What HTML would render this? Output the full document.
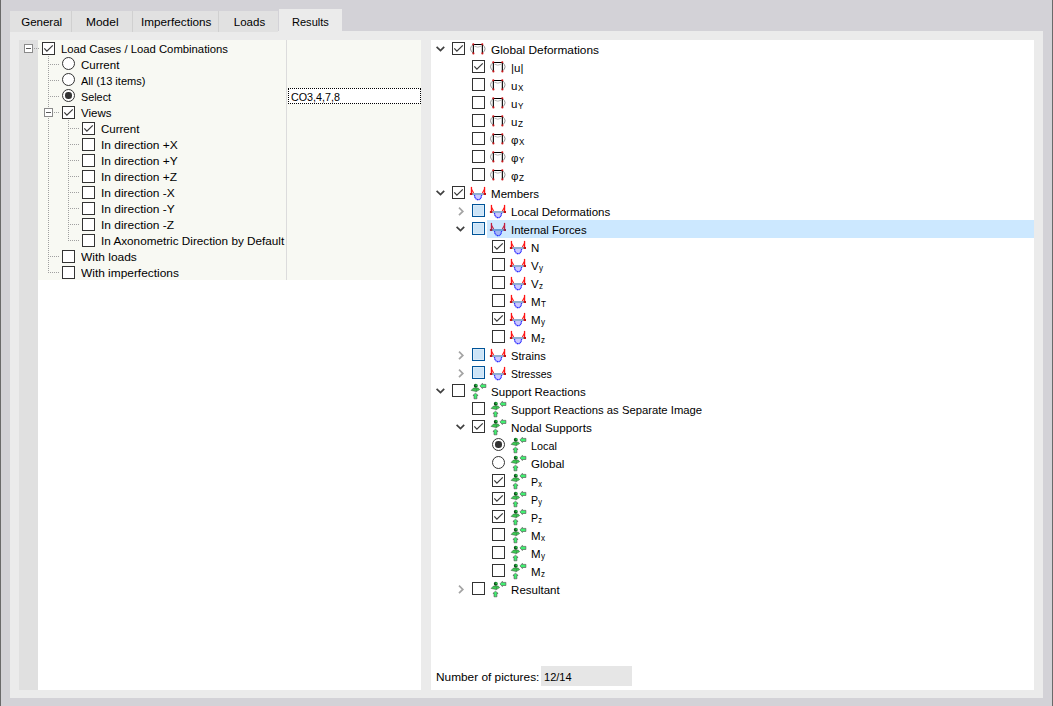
<!DOCTYPE html><html><head><meta charset="utf-8"><style>
html,body{margin:0;padding:0;}
body{width:1053px;height:706px;position:relative;overflow:hidden;background:#d3d2d7;font-family:"Liberation Sans",sans-serif;font-size:11.5px;color:#000;}
.r{position:absolute;}
.t{position:absolute;white-space:nowrap;line-height:normal;transform-origin:0 0;}
.cb{position:absolute;width:11px;height:11px;border:1px solid #333;background:#fff;}
.cb.ind{border-color:#005499;background:#cce4f7;box-shadow:inset 0 0 0 1px #dcecf9;}
.ra{position:absolute;width:11px;height:11px;border:1px solid #333;border-radius:50%;background:#fff;}
.rd{position:absolute;left:2.25px;top:2.25px;width:6.5px;height:6.5px;border-radius:50%;background:#333;}
.eb{position:absolute;width:7px;height:7px;border:1px solid #8a8a8a;background:#fff;}
.ebm{position:absolute;left:1px;top:3px;width:5px;height:1px;background:#5a5a5a;}
.vd{position:absolute;width:1px;background:repeating-linear-gradient(to bottom,#a0a0a0 0,#a0a0a0 1px,transparent 1px,transparent 2px);}
.hd{position:absolute;height:1px;background:repeating-linear-gradient(to right,#a0a0a0 0,#a0a0a0 1px,transparent 1px,transparent 2px);}
.ic{position:absolute;}
sub{font-size:9px;vertical-align:baseline;position:relative;top:1px;display:inline-block;transform:scaleX(0.9);transform-origin:0 0;}
</style></head><body>
<svg width="0" height="0" style="position:absolute"><defs><radialGradient id="sg" cx="0.65" cy="0.35" r="0.7"><stop offset="0" stop-color="#34d456"/><stop offset="0.5" stop-color="#0a6a1c"/><stop offset="1" stop-color="#002a08"/></radialGradient></defs></svg>

<div class="r" style="left:0px;top:0px;width:1px;height:706px;background:#6a6a6a;"></div>
<div class="r" style="left:1052px;top:0px;width:1px;height:706px;background:#6a6a6a;"></div>
<div class="r" style="left:10px;top:31px;width:1033px;height:667px;background:#ebebeb;"></div>
<div class="r" style="left:10px;top:11px;width:61px;height:21px;background:#e1e1e1;"></div>
<div class="r" style="left:72px;top:11px;width:60px;height:21px;background:#e1e1e1;"></div>
<div class="r" style="left:133px;top:11px;width:85px;height:21px;background:#e1e1e1;"></div>
<div class="r" style="left:219px;top:11px;width:59px;height:21px;background:#e1e1e1;"></div>
<div class="r" style="left:71px;top:11px;width:1px;height:21px;background:#d0d0d0;"></div>
<div class="r" style="left:132px;top:11px;width:1px;height:21px;background:#d0d0d0;"></div>
<div class="r" style="left:218px;top:11px;width:1px;height:21px;background:#d0d0d0;"></div>
<div class="r" style="left:279px;top:9px;width:63px;height:23px;background:#ebebeb;"></div>
<div class="t" style="left:21.20px;top:15.59px;">General</div>
<div class="t" style="left:85.70px;top:15.59px;transform:scaleX(1.04);">Model</div>
<div class="t" style="left:140.90px;top:15.59px;transform:scaleX(1.02);">Imperfections</div>
<div class="t" style="left:233.80px;top:15.59px;">Loads</div>
<div class="t" style="left:291.90px;top:15.59px;transform:scaleX(0.96);">Results</div>
<div class="r" style="left:19px;top:40px;width:402px;height:650px;background:#ffffff;"></div>
<div class="r" style="left:19px;top:40px;width:19px;height:650px;background:#e0e0e0;"></div>
<div class="r" style="left:38px;top:40px;width:383px;height:240px;background:#f8f9f3;"></div>
<div class="r" style="left:286px;top:40px;width:1px;height:240px;background:#dcdcdc;"></div>
<div class="r" style="left:288px;top:88px;width:131px;height:14px;background:#fff;border:1px dotted #000;"></div>
<div class="t" style="left:291.30px;top:90.59px;transform:scaleX(0.934);">CO3,4,7,8</div>
<div class="eb" style="left:24px;top:44px"><div class="ebm"></div></div>
<div class="hd" style="left:34px;top:48px;width:6px"></div>
<div class="cb" style="left:42px;top:42px"><svg width="13" height="13" style="position:absolute;left:-1px;top:-1px"><path d="M2.3 6.4 L4.9 9.2 L10.8 3.3" fill="none" stroke="#3a3a3a" stroke-width="1.2"/></svg></div>
<div class="t" style="left:61.00px;top:42.59px;transform:scaleX(0.982);">Load Cases / Load Combinations</div>
<div class="vd" style="left:48px;top:56px;height:217px"></div>
<div class="hd" style="left:50px;top:64px;width:10px"></div>
<div class="ra" style="left:62px;top:57px"></div>
<div class="t" style="left:81.00px;top:58.59px;">Current</div>
<div class="hd" style="left:50px;top:80px;width:10px"></div>
<div class="ra" style="left:62px;top:73px"></div>
<div class="t" style="left:81.00px;top:74.59px;transform:scaleX(0.96);">All (13 items)</div>
<div class="hd" style="left:50px;top:96px;width:10px"></div>
<div class="ra" style="left:62px;top:89px"><div class="rd"></div></div>
<div class="t" style="left:81.00px;top:90.59px;transform:scaleX(0.94);">Select</div>
<div class="eb" style="left:44px;top:108px"><div class="ebm"></div></div>
<div class="hd" style="left:54px;top:112px;width:6px"></div>
<div class="cb" style="left:62px;top:106px"><svg width="13" height="13" style="position:absolute;left:-1px;top:-1px"><path d="M2.3 6.4 L4.9 9.2 L10.8 3.3" fill="none" stroke="#3a3a3a" stroke-width="1.2"/></svg></div>
<div class="t" style="left:81.00px;top:106.59px;">Views</div>
<div class="vd" style="left:68px;top:120px;height:121px"></div>
<div class="hd" style="left:70px;top:128px;width:10px"></div>
<div class="cb" style="left:82px;top:122px"><svg width="13" height="13" style="position:absolute;left:-1px;top:-1px"><path d="M2.3 6.4 L4.9 9.2 L10.8 3.3" fill="none" stroke="#3a3a3a" stroke-width="1.2"/></svg></div>
<div class="t" style="left:101.00px;top:122.59px;">Current</div>
<div class="hd" style="left:70px;top:144px;width:10px"></div>
<div class="cb" style="left:82px;top:138px"></div>
<div class="t" style="left:101.00px;top:138.59px;transform:scaleX(1.04);">In direction +X</div>
<div class="hd" style="left:70px;top:160px;width:10px"></div>
<div class="cb" style="left:82px;top:154px"></div>
<div class="t" style="left:101.00px;top:154.59px;transform:scaleX(1.04);">In direction +Y</div>
<div class="hd" style="left:70px;top:176px;width:10px"></div>
<div class="cb" style="left:82px;top:170px"></div>
<div class="t" style="left:101.00px;top:170.59px;transform:scaleX(1.04);">In direction +Z</div>
<div class="hd" style="left:70px;top:192px;width:10px"></div>
<div class="cb" style="left:82px;top:186px"></div>
<div class="t" style="left:101.00px;top:186.59px;transform:scaleX(1.04);">In direction -X</div>
<div class="hd" style="left:70px;top:208px;width:10px"></div>
<div class="cb" style="left:82px;top:202px"></div>
<div class="t" style="left:101.00px;top:202.59px;transform:scaleX(1.04);">In direction -Y</div>
<div class="hd" style="left:70px;top:224px;width:10px"></div>
<div class="cb" style="left:82px;top:218px"></div>
<div class="t" style="left:101.00px;top:218.59px;transform:scaleX(1.04);">In direction -Z</div>
<div class="hd" style="left:70px;top:240px;width:10px"></div>
<div class="cb" style="left:82px;top:234px"></div>
<div class="t" style="left:101.00px;top:234.59px;transform:scaleX(1.02);">In Axonometric Direction by Default</div>
<div class="hd" style="left:50px;top:256px;width:10px"></div>
<div class="cb" style="left:62px;top:250px"></div>
<div class="t" style="left:81.00px;top:250.59px;transform:scaleX(1.04);">With loads</div>
<div class="hd" style="left:50px;top:272px;width:10px"></div>
<div class="cb" style="left:62px;top:266px"></div>
<div class="t" style="left:81.00px;top:266.59px;transform:scaleX(1.035);">With imperfections</div>
<div class="r" style="left:431px;top:40px;width:603px;height:650px;background:#ffffff;"></div>
<div class="r" style="left:487px;top:220px;width:547px;height:18px;background:#cce8ff;"></div>
<svg class="ic" style="left:432px;top:40px" width="16" height="18"><path d="M4.6 6.8 L8.5 10.6 L12.2 6.8" fill="none" stroke="#404040" stroke-width="1.7"/></svg>
<div class="cb" style="left:452px;top:42px"><svg width="13" height="13" style="position:absolute;left:-1px;top:-1px"><path d="M2.3 6.4 L4.9 9.2 L10.8 3.3" fill="none" stroke="#3a3a3a" stroke-width="1.2"/></svg></div>
<svg class="ic" style="left:468px;top:40px" width="20" height="18" viewBox="0 0 20 18">
<path d="M5.3 4.4 Q-0.3 8.8 5.3 13.2" fill="none" stroke="#989898" stroke-width="1"/>
<path d="M14.3 4.4 Q19.9 8.8 14.3 13.2" fill="none" stroke="#989898" stroke-width="1"/>
<path d="M6.5 6.2 Q9.8 8.2 13.2 6.2" fill="none" stroke="#b0b0b0" stroke-width="0.9"/>
<path d="M5.35 13.4 L5.35 4.45 L14.35 4.45 L14.35 13.4" fill="none" stroke="#000" stroke-width="1.1"/>
<circle cx="5.3" cy="4.3" r="1.05" fill="#cc1418"/><circle cx="14.3" cy="4.3" r="1.05" fill="#cc1418"/>
<circle cx="5.4" cy="13.4" r="1.05" fill="#cc1418"/><circle cx="14.4" cy="13.4" r="1.05" fill="#cc1418"/>
</svg>
<div class="t" style="left:491.10px;top:43.59px;transform:scaleX(1.03);">Global Deformations</div>
<div class="cb" style="left:472px;top:60px"><svg width="13" height="13" style="position:absolute;left:-1px;top:-1px"><path d="M2.3 6.4 L4.9 9.2 L10.8 3.3" fill="none" stroke="#3a3a3a" stroke-width="1.2"/></svg></div>
<svg class="ic" style="left:488px;top:58px" width="20" height="18" viewBox="0 0 20 18">
<path d="M5.3 4.4 Q-0.3 8.8 5.3 13.2" fill="none" stroke="#989898" stroke-width="1"/>
<path d="M14.3 4.4 Q19.9 8.8 14.3 13.2" fill="none" stroke="#989898" stroke-width="1"/>
<path d="M6.5 6.2 Q9.8 8.2 13.2 6.2" fill="none" stroke="#b0b0b0" stroke-width="0.9"/>
<path d="M5.35 13.4 L5.35 4.45 L14.35 4.45 L14.35 13.4" fill="none" stroke="#000" stroke-width="1.1"/>
<circle cx="5.3" cy="4.3" r="1.05" fill="#cc1418"/><circle cx="14.3" cy="4.3" r="1.05" fill="#cc1418"/>
<circle cx="5.4" cy="13.4" r="1.05" fill="#cc1418"/><circle cx="14.4" cy="13.4" r="1.05" fill="#cc1418"/>
</svg>
<div class="t" style="left:511.10px;top:61.59px;">|u|</div>
<div class="cb" style="left:472px;top:78px"></div>
<svg class="ic" style="left:488px;top:76px" width="20" height="18" viewBox="0 0 20 18">
<path d="M5.3 4.4 Q-0.3 8.8 5.3 13.2" fill="none" stroke="#989898" stroke-width="1"/>
<path d="M14.3 4.4 Q19.9 8.8 14.3 13.2" fill="none" stroke="#989898" stroke-width="1"/>
<path d="M6.5 6.2 Q9.8 8.2 13.2 6.2" fill="none" stroke="#b0b0b0" stroke-width="0.9"/>
<path d="M5.35 13.4 L5.35 4.45 L14.35 4.45 L14.35 13.4" fill="none" stroke="#000" stroke-width="1.1"/>
<circle cx="5.3" cy="4.3" r="1.05" fill="#cc1418"/><circle cx="14.3" cy="4.3" r="1.05" fill="#cc1418"/>
<circle cx="5.4" cy="13.4" r="1.05" fill="#cc1418"/><circle cx="14.4" cy="13.4" r="1.05" fill="#cc1418"/>
</svg>
<div class="t" style="left:511.10px;top:79.59px;">u<sub>X</sub></div>
<div class="cb" style="left:472px;top:96px"></div>
<svg class="ic" style="left:488px;top:94px" width="20" height="18" viewBox="0 0 20 18">
<path d="M5.3 4.4 Q-0.3 8.8 5.3 13.2" fill="none" stroke="#989898" stroke-width="1"/>
<path d="M14.3 4.4 Q19.9 8.8 14.3 13.2" fill="none" stroke="#989898" stroke-width="1"/>
<path d="M6.5 6.2 Q9.8 8.2 13.2 6.2" fill="none" stroke="#b0b0b0" stroke-width="0.9"/>
<path d="M5.35 13.4 L5.35 4.45 L14.35 4.45 L14.35 13.4" fill="none" stroke="#000" stroke-width="1.1"/>
<circle cx="5.3" cy="4.3" r="1.05" fill="#cc1418"/><circle cx="14.3" cy="4.3" r="1.05" fill="#cc1418"/>
<circle cx="5.4" cy="13.4" r="1.05" fill="#cc1418"/><circle cx="14.4" cy="13.4" r="1.05" fill="#cc1418"/>
</svg>
<div class="t" style="left:511.10px;top:97.59px;">u<sub>Y</sub></div>
<div class="cb" style="left:472px;top:114px"></div>
<svg class="ic" style="left:488px;top:112px" width="20" height="18" viewBox="0 0 20 18">
<path d="M5.3 4.4 Q-0.3 8.8 5.3 13.2" fill="none" stroke="#989898" stroke-width="1"/>
<path d="M14.3 4.4 Q19.9 8.8 14.3 13.2" fill="none" stroke="#989898" stroke-width="1"/>
<path d="M6.5 6.2 Q9.8 8.2 13.2 6.2" fill="none" stroke="#b0b0b0" stroke-width="0.9"/>
<path d="M5.35 13.4 L5.35 4.45 L14.35 4.45 L14.35 13.4" fill="none" stroke="#000" stroke-width="1.1"/>
<circle cx="5.3" cy="4.3" r="1.05" fill="#cc1418"/><circle cx="14.3" cy="4.3" r="1.05" fill="#cc1418"/>
<circle cx="5.4" cy="13.4" r="1.05" fill="#cc1418"/><circle cx="14.4" cy="13.4" r="1.05" fill="#cc1418"/>
</svg>
<div class="t" style="left:511.10px;top:115.59px;">u<sub>Z</sub></div>
<div class="cb" style="left:472px;top:132px"></div>
<svg class="ic" style="left:488px;top:130px" width="20" height="18" viewBox="0 0 20 18">
<path d="M5.3 4.4 Q-0.3 8.8 5.3 13.2" fill="none" stroke="#989898" stroke-width="1"/>
<path d="M14.3 4.4 Q19.9 8.8 14.3 13.2" fill="none" stroke="#989898" stroke-width="1"/>
<path d="M6.5 6.2 Q9.8 8.2 13.2 6.2" fill="none" stroke="#b0b0b0" stroke-width="0.9"/>
<path d="M5.35 13.4 L5.35 4.45 L14.35 4.45 L14.35 13.4" fill="none" stroke="#000" stroke-width="1.1"/>
<circle cx="5.3" cy="4.3" r="1.05" fill="#cc1418"/><circle cx="14.3" cy="4.3" r="1.05" fill="#cc1418"/>
<circle cx="5.4" cy="13.4" r="1.05" fill="#cc1418"/><circle cx="14.4" cy="13.4" r="1.05" fill="#cc1418"/>
</svg>
<div class="t" style="left:511.10px;top:133.59px;">φ<sub>X</sub></div>
<div class="cb" style="left:472px;top:150px"></div>
<svg class="ic" style="left:488px;top:148px" width="20" height="18" viewBox="0 0 20 18">
<path d="M5.3 4.4 Q-0.3 8.8 5.3 13.2" fill="none" stroke="#989898" stroke-width="1"/>
<path d="M14.3 4.4 Q19.9 8.8 14.3 13.2" fill="none" stroke="#989898" stroke-width="1"/>
<path d="M6.5 6.2 Q9.8 8.2 13.2 6.2" fill="none" stroke="#b0b0b0" stroke-width="0.9"/>
<path d="M5.35 13.4 L5.35 4.45 L14.35 4.45 L14.35 13.4" fill="none" stroke="#000" stroke-width="1.1"/>
<circle cx="5.3" cy="4.3" r="1.05" fill="#cc1418"/><circle cx="14.3" cy="4.3" r="1.05" fill="#cc1418"/>
<circle cx="5.4" cy="13.4" r="1.05" fill="#cc1418"/><circle cx="14.4" cy="13.4" r="1.05" fill="#cc1418"/>
</svg>
<div class="t" style="left:511.10px;top:151.59px;">φ<sub>Y</sub></div>
<div class="cb" style="left:472px;top:168px"></div>
<svg class="ic" style="left:488px;top:166px" width="20" height="18" viewBox="0 0 20 18">
<path d="M5.3 4.4 Q-0.3 8.8 5.3 13.2" fill="none" stroke="#989898" stroke-width="1"/>
<path d="M14.3 4.4 Q19.9 8.8 14.3 13.2" fill="none" stroke="#989898" stroke-width="1"/>
<path d="M6.5 6.2 Q9.8 8.2 13.2 6.2" fill="none" stroke="#b0b0b0" stroke-width="0.9"/>
<path d="M5.35 13.4 L5.35 4.45 L14.35 4.45 L14.35 13.4" fill="none" stroke="#000" stroke-width="1.1"/>
<circle cx="5.3" cy="4.3" r="1.05" fill="#cc1418"/><circle cx="14.3" cy="4.3" r="1.05" fill="#cc1418"/>
<circle cx="5.4" cy="13.4" r="1.05" fill="#cc1418"/><circle cx="14.4" cy="13.4" r="1.05" fill="#cc1418"/>
</svg>
<div class="t" style="left:511.10px;top:169.59px;">φ<sub>Z</sub></div>
<svg class="ic" style="left:432px;top:184px" width="16" height="18"><path d="M4.6 6.8 L8.5 10.6 L12.2 6.8" fill="none" stroke="#404040" stroke-width="1.7"/></svg>
<div class="cb" style="left:452px;top:186px"><svg width="13" height="13" style="position:absolute;left:-1px;top:-1px"><path d="M2.3 6.4 L4.9 9.2 L10.8 3.3" fill="none" stroke="#3a3a3a" stroke-width="1.2"/></svg></div>
<svg class="ic" style="left:468px;top:184px" width="20" height="18" viewBox="0 0 20 18">
<path d="M6.3 10.8 C6.6 17.6, 13.5 17.6, 13.8 10.8 Z" fill="#cbc8ff"/>
<path d="M6.5 11 C6.8 17.3, 13.3 17.3, 13.6 11" fill="none" stroke="#3030ff" stroke-width="1.3" stroke-dasharray="1.3 0.4"/>
<rect x="4" y="9" width="12" height="2" fill="#8eaed0"/>
<path d="M3.45 2.9 L3.45 10" stroke="#ff1414" stroke-width="1.3"/>
<path d="M3.7 5.5 L5.6 9" stroke="#ff1414" stroke-width="1.1"/>
<rect x="1.9" y="9" width="2.4" height="2" fill="#c81010"/>
<path d="M16.55 2.9 L16.55 10" stroke="#ff1414" stroke-width="1.3"/>
<path d="M16.3 5.5 L14.4 9" stroke="#ff1414" stroke-width="1.1"/>
<rect x="15.7" y="9" width="2.3" height="2" fill="#c81010"/>
</svg>
<div class="t" style="left:491.10px;top:187.59px;">Members</div>
<svg class="ic" style="left:454px;top:202px" width="16" height="18"><path d="M5 5.7 L8.8 9.4 L5 13.1" fill="none" stroke="#a4a4a4" stroke-width="1.7"/></svg>
<div class="cb ind" style="left:472px;top:204px"></div>
<svg class="ic" style="left:488px;top:202px" width="20" height="18" viewBox="0 0 20 18">
<path d="M6.3 10.8 C6.6 17.6, 13.5 17.6, 13.8 10.8 Z" fill="#cbc8ff"/>
<path d="M6.5 11 C6.8 17.3, 13.3 17.3, 13.6 11" fill="none" stroke="#3030ff" stroke-width="1.3" stroke-dasharray="1.3 0.4"/>
<rect x="4" y="9" width="12" height="2" fill="#8eaed0"/>
<path d="M3.45 2.9 L3.45 10" stroke="#ff1414" stroke-width="1.3"/>
<path d="M3.7 5.5 L5.6 9" stroke="#ff1414" stroke-width="1.1"/>
<rect x="1.9" y="9" width="2.4" height="2" fill="#c81010"/>
<path d="M16.55 2.9 L16.55 10" stroke="#ff1414" stroke-width="1.3"/>
<path d="M16.3 5.5 L14.4 9" stroke="#ff1414" stroke-width="1.1"/>
<rect x="15.7" y="9" width="2.3" height="2" fill="#c81010"/>
</svg>
<div class="t" style="left:511.10px;top:205.59px;">Local Deformations</div>
<svg class="ic" style="left:452px;top:220px" width="16" height="18"><path d="M4.6 6.8 L8.5 10.6 L12.2 6.8" fill="none" stroke="#404040" stroke-width="1.7"/></svg>
<div class="cb ind" style="left:472px;top:222px"></div>
<svg class="ic" style="left:488px;top:220px" width="20" height="18" viewBox="0 0 20 18">
<path d="M6.3 10.8 C6.6 17.6, 13.5 17.6, 13.8 10.8 Z" fill="#a4b6f4"/>
<path d="M6.5 11 C6.8 17.3, 13.3 17.3, 13.6 11" fill="none" stroke="#2a3cff" stroke-width="1.3" stroke-dasharray="1.3 0.4"/>
<rect x="4" y="9" width="12" height="2" fill="#6a9ed6"/>
<path d="M3.45 2.9 L3.45 10" stroke="#c02040" stroke-width="1.3"/>
<path d="M3.7 5.5 L5.6 9" stroke="#c02040" stroke-width="1.1"/>
<rect x="1.9" y="9" width="2.4" height="2" fill="#902848"/>
<path d="M16.55 2.9 L16.55 10" stroke="#c02040" stroke-width="1.3"/>
<path d="M16.3 5.5 L14.4 9" stroke="#c02040" stroke-width="1.1"/>
<rect x="15.7" y="9" width="2.3" height="2" fill="#902848"/>
</svg>
<div class="t" style="left:511.10px;top:223.59px;transform:scaleX(0.985);">Internal Forces</div>
<div class="cb" style="left:492px;top:240px"><svg width="13" height="13" style="position:absolute;left:-1px;top:-1px"><path d="M2.3 6.4 L4.9 9.2 L10.8 3.3" fill="none" stroke="#3a3a3a" stroke-width="1.2"/></svg></div>
<svg class="ic" style="left:508px;top:238px" width="20" height="18" viewBox="0 0 20 18">
<path d="M6.3 10.8 C6.6 17.6, 13.5 17.6, 13.8 10.8 Z" fill="#cbc8ff"/>
<path d="M6.5 11 C6.8 17.3, 13.3 17.3, 13.6 11" fill="none" stroke="#3030ff" stroke-width="1.3" stroke-dasharray="1.3 0.4"/>
<rect x="4" y="9" width="12" height="2" fill="#8eaed0"/>
<path d="M3.45 2.9 L3.45 10" stroke="#ff1414" stroke-width="1.3"/>
<path d="M3.7 5.5 L5.6 9" stroke="#ff1414" stroke-width="1.1"/>
<rect x="1.9" y="9" width="2.4" height="2" fill="#c81010"/>
<path d="M16.55 2.9 L16.55 10" stroke="#ff1414" stroke-width="1.3"/>
<path d="M16.3 5.5 L14.4 9" stroke="#ff1414" stroke-width="1.1"/>
<rect x="15.7" y="9" width="2.3" height="2" fill="#c81010"/>
</svg>
<div class="t" style="left:531.10px;top:241.59px;">N</div>
<div class="cb" style="left:492px;top:258px"></div>
<svg class="ic" style="left:508px;top:256px" width="20" height="18" viewBox="0 0 20 18">
<path d="M6.3 10.8 C6.6 17.6, 13.5 17.6, 13.8 10.8 Z" fill="#cbc8ff"/>
<path d="M6.5 11 C6.8 17.3, 13.3 17.3, 13.6 11" fill="none" stroke="#3030ff" stroke-width="1.3" stroke-dasharray="1.3 0.4"/>
<rect x="4" y="9" width="12" height="2" fill="#8eaed0"/>
<path d="M3.45 2.9 L3.45 10" stroke="#ff1414" stroke-width="1.3"/>
<path d="M3.7 5.5 L5.6 9" stroke="#ff1414" stroke-width="1.1"/>
<rect x="1.9" y="9" width="2.4" height="2" fill="#c81010"/>
<path d="M16.55 2.9 L16.55 10" stroke="#ff1414" stroke-width="1.3"/>
<path d="M16.3 5.5 L14.4 9" stroke="#ff1414" stroke-width="1.1"/>
<rect x="15.7" y="9" width="2.3" height="2" fill="#c81010"/>
</svg>
<div class="t" style="left:531.10px;top:259.59px;">V<sub>y</sub></div>
<div class="cb" style="left:492px;top:276px"></div>
<svg class="ic" style="left:508px;top:274px" width="20" height="18" viewBox="0 0 20 18">
<path d="M6.3 10.8 C6.6 17.6, 13.5 17.6, 13.8 10.8 Z" fill="#cbc8ff"/>
<path d="M6.5 11 C6.8 17.3, 13.3 17.3, 13.6 11" fill="none" stroke="#3030ff" stroke-width="1.3" stroke-dasharray="1.3 0.4"/>
<rect x="4" y="9" width="12" height="2" fill="#8eaed0"/>
<path d="M3.45 2.9 L3.45 10" stroke="#ff1414" stroke-width="1.3"/>
<path d="M3.7 5.5 L5.6 9" stroke="#ff1414" stroke-width="1.1"/>
<rect x="1.9" y="9" width="2.4" height="2" fill="#c81010"/>
<path d="M16.55 2.9 L16.55 10" stroke="#ff1414" stroke-width="1.3"/>
<path d="M16.3 5.5 L14.4 9" stroke="#ff1414" stroke-width="1.1"/>
<rect x="15.7" y="9" width="2.3" height="2" fill="#c81010"/>
</svg>
<div class="t" style="left:531.10px;top:277.59px;">V<sub>z</sub></div>
<div class="cb" style="left:492px;top:294px"></div>
<svg class="ic" style="left:508px;top:292px" width="20" height="18" viewBox="0 0 20 18">
<path d="M6.3 10.8 C6.6 17.6, 13.5 17.6, 13.8 10.8 Z" fill="#cbc8ff"/>
<path d="M6.5 11 C6.8 17.3, 13.3 17.3, 13.6 11" fill="none" stroke="#3030ff" stroke-width="1.3" stroke-dasharray="1.3 0.4"/>
<rect x="4" y="9" width="12" height="2" fill="#8eaed0"/>
<path d="M3.45 2.9 L3.45 10" stroke="#ff1414" stroke-width="1.3"/>
<path d="M3.7 5.5 L5.6 9" stroke="#ff1414" stroke-width="1.1"/>
<rect x="1.9" y="9" width="2.4" height="2" fill="#c81010"/>
<path d="M16.55 2.9 L16.55 10" stroke="#ff1414" stroke-width="1.3"/>
<path d="M16.3 5.5 L14.4 9" stroke="#ff1414" stroke-width="1.1"/>
<rect x="15.7" y="9" width="2.3" height="2" fill="#c81010"/>
</svg>
<div class="t" style="left:531.10px;top:295.59px;">M<sub>T</sub></div>
<div class="cb" style="left:492px;top:312px"><svg width="13" height="13" style="position:absolute;left:-1px;top:-1px"><path d="M2.3 6.4 L4.9 9.2 L10.8 3.3" fill="none" stroke="#3a3a3a" stroke-width="1.2"/></svg></div>
<svg class="ic" style="left:508px;top:310px" width="20" height="18" viewBox="0 0 20 18">
<path d="M6.3 10.8 C6.6 17.6, 13.5 17.6, 13.8 10.8 Z" fill="#cbc8ff"/>
<path d="M6.5 11 C6.8 17.3, 13.3 17.3, 13.6 11" fill="none" stroke="#3030ff" stroke-width="1.3" stroke-dasharray="1.3 0.4"/>
<rect x="4" y="9" width="12" height="2" fill="#8eaed0"/>
<path d="M3.45 2.9 L3.45 10" stroke="#ff1414" stroke-width="1.3"/>
<path d="M3.7 5.5 L5.6 9" stroke="#ff1414" stroke-width="1.1"/>
<rect x="1.9" y="9" width="2.4" height="2" fill="#c81010"/>
<path d="M16.55 2.9 L16.55 10" stroke="#ff1414" stroke-width="1.3"/>
<path d="M16.3 5.5 L14.4 9" stroke="#ff1414" stroke-width="1.1"/>
<rect x="15.7" y="9" width="2.3" height="2" fill="#c81010"/>
</svg>
<div class="t" style="left:531.10px;top:313.59px;">M<sub>y</sub></div>
<div class="cb" style="left:492px;top:330px"></div>
<svg class="ic" style="left:508px;top:328px" width="20" height="18" viewBox="0 0 20 18">
<path d="M6.3 10.8 C6.6 17.6, 13.5 17.6, 13.8 10.8 Z" fill="#cbc8ff"/>
<path d="M6.5 11 C6.8 17.3, 13.3 17.3, 13.6 11" fill="none" stroke="#3030ff" stroke-width="1.3" stroke-dasharray="1.3 0.4"/>
<rect x="4" y="9" width="12" height="2" fill="#8eaed0"/>
<path d="M3.45 2.9 L3.45 10" stroke="#ff1414" stroke-width="1.3"/>
<path d="M3.7 5.5 L5.6 9" stroke="#ff1414" stroke-width="1.1"/>
<rect x="1.9" y="9" width="2.4" height="2" fill="#c81010"/>
<path d="M16.55 2.9 L16.55 10" stroke="#ff1414" stroke-width="1.3"/>
<path d="M16.3 5.5 L14.4 9" stroke="#ff1414" stroke-width="1.1"/>
<rect x="15.7" y="9" width="2.3" height="2" fill="#c81010"/>
</svg>
<div class="t" style="left:531.10px;top:331.59px;">M<sub>z</sub></div>
<svg class="ic" style="left:454px;top:346px" width="16" height="18"><path d="M5 5.7 L8.8 9.4 L5 13.1" fill="none" stroke="#a4a4a4" stroke-width="1.7"/></svg>
<div class="cb ind" style="left:472px;top:348px"></div>
<svg class="ic" style="left:488px;top:346px" width="20" height="18" viewBox="0 0 20 18">
<path d="M6.3 10.8 C6.6 17.6, 13.5 17.6, 13.8 10.8 Z" fill="#cbc8ff"/>
<path d="M6.5 11 C6.8 17.3, 13.3 17.3, 13.6 11" fill="none" stroke="#3030ff" stroke-width="1.3" stroke-dasharray="1.3 0.4"/>
<rect x="4" y="9" width="12" height="2" fill="#8eaed0"/>
<path d="M3.45 2.9 L3.45 10" stroke="#ff1414" stroke-width="1.3"/>
<path d="M3.7 5.5 L5.6 9" stroke="#ff1414" stroke-width="1.1"/>
<rect x="1.9" y="9" width="2.4" height="2" fill="#c81010"/>
<path d="M16.55 2.9 L16.55 10" stroke="#ff1414" stroke-width="1.3"/>
<path d="M16.3 5.5 L14.4 9" stroke="#ff1414" stroke-width="1.1"/>
<rect x="15.7" y="9" width="2.3" height="2" fill="#c81010"/>
</svg>
<div class="t" style="left:511.10px;top:349.59px;transform:scaleX(0.97);">Strains</div>
<svg class="ic" style="left:454px;top:364px" width="16" height="18"><path d="M5 5.7 L8.8 9.4 L5 13.1" fill="none" stroke="#a4a4a4" stroke-width="1.7"/></svg>
<div class="cb ind" style="left:472px;top:366px"></div>
<svg class="ic" style="left:488px;top:364px" width="20" height="18" viewBox="0 0 20 18">
<path d="M6.3 10.8 C6.6 17.6, 13.5 17.6, 13.8 10.8 Z" fill="#cbc8ff"/>
<path d="M6.5 11 C6.8 17.3, 13.3 17.3, 13.6 11" fill="none" stroke="#3030ff" stroke-width="1.3" stroke-dasharray="1.3 0.4"/>
<rect x="4" y="9" width="12" height="2" fill="#8eaed0"/>
<path d="M3.45 2.9 L3.45 10" stroke="#ff1414" stroke-width="1.3"/>
<path d="M3.7 5.5 L5.6 9" stroke="#ff1414" stroke-width="1.1"/>
<rect x="1.9" y="9" width="2.4" height="2" fill="#c81010"/>
<path d="M16.55 2.9 L16.55 10" stroke="#ff1414" stroke-width="1.3"/>
<path d="M16.3 5.5 L14.4 9" stroke="#ff1414" stroke-width="1.1"/>
<rect x="15.7" y="9" width="2.3" height="2" fill="#c81010"/>
</svg>
<div class="t" style="left:511.10px;top:367.59px;transform:scaleX(0.91);">Stresses</div>
<svg class="ic" style="left:432px;top:382px" width="16" height="18"><path d="M4.6 6.8 L8.5 10.6 L12.2 6.8" fill="none" stroke="#404040" stroke-width="1.7"/></svg>
<div class="cb" style="left:452px;top:384px"></div>
<svg class="ic" style="left:468px;top:382px" width="20" height="18" viewBox="0 0 20 18">
<path d="M3.1 8.4 L5.4 6.1 L10.2 6.1 L11.7 7.5 L8.4 9.6 Z" fill="#3ccf55" stroke="#3a5a3e" stroke-width="0.55"/>
<path d="M8.4 7.1 L8.4 9.6" stroke="#3a5a3e" stroke-width="0.5"/>
<circle cx="7.8" cy="3.8" r="1.95" fill="url(#sg)"/>
<path d="M7.45 11.2 L10.1 13.4 L8.9 13.4 L8.9 16.8 L6 16.8 L6 13.4 L4.9 13.4 Z" fill="#40f070" stroke="#4a4a4a" stroke-width="0.6"/>
<path d="M12 3.9 L14.4 1.3 L14.4 2.4 L17.9 2.4 L17.9 5.5 L14.4 5.5 L14.4 6.6 Z" fill="#40f070" stroke="#4a4a4a" stroke-width="0.6"/>
</svg>
<div class="t" style="left:491.10px;top:385.59px;">Support Reactions</div>
<div class="cb" style="left:472px;top:402px"></div>
<svg class="ic" style="left:488px;top:400px" width="20" height="18" viewBox="0 0 20 18">
<path d="M3.1 8.4 L5.4 6.1 L10.2 6.1 L11.7 7.5 L8.4 9.6 Z" fill="#3ccf55" stroke="#3a5a3e" stroke-width="0.55"/>
<path d="M8.4 7.1 L8.4 9.6" stroke="#3a5a3e" stroke-width="0.5"/>
<circle cx="7.8" cy="3.8" r="1.95" fill="url(#sg)"/>
<path d="M7.45 11.2 L10.1 13.4 L8.9 13.4 L8.9 16.8 L6 16.8 L6 13.4 L4.9 13.4 Z" fill="#40f070" stroke="#4a4a4a" stroke-width="0.6"/>
<path d="M12 3.9 L14.4 1.3 L14.4 2.4 L17.9 2.4 L17.9 5.5 L14.4 5.5 L14.4 6.6 Z" fill="#40f070" stroke="#4a4a4a" stroke-width="0.6"/>
</svg>
<div class="t" style="left:511.10px;top:403.59px;transform:scaleX(0.98);">Support Reactions as Separate Image</div>
<svg class="ic" style="left:452px;top:418px" width="16" height="18"><path d="M4.6 6.8 L8.5 10.6 L12.2 6.8" fill="none" stroke="#404040" stroke-width="1.7"/></svg>
<div class="cb" style="left:472px;top:420px"><svg width="13" height="13" style="position:absolute;left:-1px;top:-1px"><path d="M2.3 6.4 L4.9 9.2 L10.8 3.3" fill="none" stroke="#3a3a3a" stroke-width="1.2"/></svg></div>
<svg class="ic" style="left:488px;top:418px" width="20" height="18" viewBox="0 0 20 18">
<path d="M3.1 8.4 L5.4 6.1 L10.2 6.1 L11.7 7.5 L8.4 9.6 Z" fill="#3ccf55" stroke="#3a5a3e" stroke-width="0.55"/>
<path d="M8.4 7.1 L8.4 9.6" stroke="#3a5a3e" stroke-width="0.5"/>
<circle cx="7.8" cy="3.8" r="1.95" fill="url(#sg)"/>
<path d="M7.45 11.2 L10.1 13.4 L8.9 13.4 L8.9 16.8 L6 16.8 L6 13.4 L4.9 13.4 Z" fill="#40f070" stroke="#4a4a4a" stroke-width="0.6"/>
<path d="M12 3.9 L14.4 1.3 L14.4 2.4 L17.9 2.4 L17.9 5.5 L14.4 5.5 L14.4 6.6 Z" fill="#40f070" stroke="#4a4a4a" stroke-width="0.6"/>
</svg>
<div class="t" style="left:511.10px;top:421.59px;transform:scaleX(1.02);">Nodal Supports</div>
<div class="ra" style="left:492px;top:438px"><div class="rd"></div></div>
<svg class="ic" style="left:508px;top:436px" width="20" height="18" viewBox="0 0 20 18">
<path d="M3.1 8.4 L5.4 6.1 L10.2 6.1 L11.7 7.5 L8.4 9.6 Z" fill="#3ccf55" stroke="#3a5a3e" stroke-width="0.55"/>
<path d="M8.4 7.1 L8.4 9.6" stroke="#3a5a3e" stroke-width="0.5"/>
<circle cx="7.8" cy="3.8" r="1.95" fill="url(#sg)"/>
<path d="M7.45 11.2 L10.1 13.4 L8.9 13.4 L8.9 16.8 L6 16.8 L6 13.4 L4.9 13.4 Z" fill="#40f070" stroke="#4a4a4a" stroke-width="0.6"/>
<path d="M12 3.9 L14.4 1.3 L14.4 2.4 L17.9 2.4 L17.9 5.5 L14.4 5.5 L14.4 6.6 Z" fill="#40f070" stroke="#4a4a4a" stroke-width="0.6"/>
</svg>
<div class="t" style="left:531.10px;top:439.59px;transform:scaleX(0.94);">Local</div>
<div class="ra" style="left:492px;top:456px"></div>
<svg class="ic" style="left:508px;top:454px" width="20" height="18" viewBox="0 0 20 18">
<path d="M3.1 8.4 L5.4 6.1 L10.2 6.1 L11.7 7.5 L8.4 9.6 Z" fill="#3ccf55" stroke="#3a5a3e" stroke-width="0.55"/>
<path d="M8.4 7.1 L8.4 9.6" stroke="#3a5a3e" stroke-width="0.5"/>
<circle cx="7.8" cy="3.8" r="1.95" fill="url(#sg)"/>
<path d="M7.45 11.2 L10.1 13.4 L8.9 13.4 L8.9 16.8 L6 16.8 L6 13.4 L4.9 13.4 Z" fill="#40f070" stroke="#4a4a4a" stroke-width="0.6"/>
<path d="M12 3.9 L14.4 1.3 L14.4 2.4 L17.9 2.4 L17.9 5.5 L14.4 5.5 L14.4 6.6 Z" fill="#40f070" stroke="#4a4a4a" stroke-width="0.6"/>
</svg>
<div class="t" style="left:531.10px;top:457.59px;">Global</div>
<div class="cb" style="left:492px;top:474px"><svg width="13" height="13" style="position:absolute;left:-1px;top:-1px"><path d="M2.3 6.4 L4.9 9.2 L10.8 3.3" fill="none" stroke="#3a3a3a" stroke-width="1.2"/></svg></div>
<svg class="ic" style="left:508px;top:472px" width="20" height="18" viewBox="0 0 20 18">
<path d="M3.1 8.4 L5.4 6.1 L10.2 6.1 L11.7 7.5 L8.4 9.6 Z" fill="#3ccf55" stroke="#3a5a3e" stroke-width="0.55"/>
<path d="M8.4 7.1 L8.4 9.6" stroke="#3a5a3e" stroke-width="0.5"/>
<circle cx="7.8" cy="3.8" r="1.95" fill="url(#sg)"/>
<path d="M7.45 11.2 L10.1 13.4 L8.9 13.4 L8.9 16.8 L6 16.8 L6 13.4 L4.9 13.4 Z" fill="#40f070" stroke="#4a4a4a" stroke-width="0.6"/>
<path d="M12 3.9 L14.4 1.3 L14.4 2.4 L17.9 2.4 L17.9 5.5 L14.4 5.5 L14.4 6.6 Z" fill="#40f070" stroke="#4a4a4a" stroke-width="0.6"/>
</svg>
<div class="t" style="left:531.10px;top:475.59px;transform:scaleX(0.92);">P<sub>x</sub></div>
<div class="cb" style="left:492px;top:492px"><svg width="13" height="13" style="position:absolute;left:-1px;top:-1px"><path d="M2.3 6.4 L4.9 9.2 L10.8 3.3" fill="none" stroke="#3a3a3a" stroke-width="1.2"/></svg></div>
<svg class="ic" style="left:508px;top:490px" width="20" height="18" viewBox="0 0 20 18">
<path d="M3.1 8.4 L5.4 6.1 L10.2 6.1 L11.7 7.5 L8.4 9.6 Z" fill="#3ccf55" stroke="#3a5a3e" stroke-width="0.55"/>
<path d="M8.4 7.1 L8.4 9.6" stroke="#3a5a3e" stroke-width="0.5"/>
<circle cx="7.8" cy="3.8" r="1.95" fill="url(#sg)"/>
<path d="M7.45 11.2 L10.1 13.4 L8.9 13.4 L8.9 16.8 L6 16.8 L6 13.4 L4.9 13.4 Z" fill="#40f070" stroke="#4a4a4a" stroke-width="0.6"/>
<path d="M12 3.9 L14.4 1.3 L14.4 2.4 L17.9 2.4 L17.9 5.5 L14.4 5.5 L14.4 6.6 Z" fill="#40f070" stroke="#4a4a4a" stroke-width="0.6"/>
</svg>
<div class="t" style="left:531.10px;top:493.59px;transform:scaleX(0.92);">P<sub>y</sub></div>
<div class="cb" style="left:492px;top:510px"><svg width="13" height="13" style="position:absolute;left:-1px;top:-1px"><path d="M2.3 6.4 L4.9 9.2 L10.8 3.3" fill="none" stroke="#3a3a3a" stroke-width="1.2"/></svg></div>
<svg class="ic" style="left:508px;top:508px" width="20" height="18" viewBox="0 0 20 18">
<path d="M3.1 8.4 L5.4 6.1 L10.2 6.1 L11.7 7.5 L8.4 9.6 Z" fill="#3ccf55" stroke="#3a5a3e" stroke-width="0.55"/>
<path d="M8.4 7.1 L8.4 9.6" stroke="#3a5a3e" stroke-width="0.5"/>
<circle cx="7.8" cy="3.8" r="1.95" fill="url(#sg)"/>
<path d="M7.45 11.2 L10.1 13.4 L8.9 13.4 L8.9 16.8 L6 16.8 L6 13.4 L4.9 13.4 Z" fill="#40f070" stroke="#4a4a4a" stroke-width="0.6"/>
<path d="M12 3.9 L14.4 1.3 L14.4 2.4 L17.9 2.4 L17.9 5.5 L14.4 5.5 L14.4 6.6 Z" fill="#40f070" stroke="#4a4a4a" stroke-width="0.6"/>
</svg>
<div class="t" style="left:531.10px;top:511.59px;transform:scaleX(0.92);">P<sub>z</sub></div>
<div class="cb" style="left:492px;top:528px"></div>
<svg class="ic" style="left:508px;top:526px" width="20" height="18" viewBox="0 0 20 18">
<path d="M3.1 8.4 L5.4 6.1 L10.2 6.1 L11.7 7.5 L8.4 9.6 Z" fill="#3ccf55" stroke="#3a5a3e" stroke-width="0.55"/>
<path d="M8.4 7.1 L8.4 9.6" stroke="#3a5a3e" stroke-width="0.5"/>
<circle cx="7.8" cy="3.8" r="1.95" fill="url(#sg)"/>
<path d="M7.45 11.2 L10.1 13.4 L8.9 13.4 L8.9 16.8 L6 16.8 L6 13.4 L4.9 13.4 Z" fill="#40f070" stroke="#4a4a4a" stroke-width="0.6"/>
<path d="M12 3.9 L14.4 1.3 L14.4 2.4 L17.9 2.4 L17.9 5.5 L14.4 5.5 L14.4 6.6 Z" fill="#40f070" stroke="#4a4a4a" stroke-width="0.6"/>
</svg>
<div class="t" style="left:531.10px;top:529.59px;">M<sub>x</sub></div>
<div class="cb" style="left:492px;top:546px"></div>
<svg class="ic" style="left:508px;top:544px" width="20" height="18" viewBox="0 0 20 18">
<path d="M3.1 8.4 L5.4 6.1 L10.2 6.1 L11.7 7.5 L8.4 9.6 Z" fill="#3ccf55" stroke="#3a5a3e" stroke-width="0.55"/>
<path d="M8.4 7.1 L8.4 9.6" stroke="#3a5a3e" stroke-width="0.5"/>
<circle cx="7.8" cy="3.8" r="1.95" fill="url(#sg)"/>
<path d="M7.45 11.2 L10.1 13.4 L8.9 13.4 L8.9 16.8 L6 16.8 L6 13.4 L4.9 13.4 Z" fill="#40f070" stroke="#4a4a4a" stroke-width="0.6"/>
<path d="M12 3.9 L14.4 1.3 L14.4 2.4 L17.9 2.4 L17.9 5.5 L14.4 5.5 L14.4 6.6 Z" fill="#40f070" stroke="#4a4a4a" stroke-width="0.6"/>
</svg>
<div class="t" style="left:531.10px;top:547.59px;">M<sub>y</sub></div>
<div class="cb" style="left:492px;top:564px"></div>
<svg class="ic" style="left:508px;top:562px" width="20" height="18" viewBox="0 0 20 18">
<path d="M3.1 8.4 L5.4 6.1 L10.2 6.1 L11.7 7.5 L8.4 9.6 Z" fill="#3ccf55" stroke="#3a5a3e" stroke-width="0.55"/>
<path d="M8.4 7.1 L8.4 9.6" stroke="#3a5a3e" stroke-width="0.5"/>
<circle cx="7.8" cy="3.8" r="1.95" fill="url(#sg)"/>
<path d="M7.45 11.2 L10.1 13.4 L8.9 13.4 L8.9 16.8 L6 16.8 L6 13.4 L4.9 13.4 Z" fill="#40f070" stroke="#4a4a4a" stroke-width="0.6"/>
<path d="M12 3.9 L14.4 1.3 L14.4 2.4 L17.9 2.4 L17.9 5.5 L14.4 5.5 L14.4 6.6 Z" fill="#40f070" stroke="#4a4a4a" stroke-width="0.6"/>
</svg>
<div class="t" style="left:531.10px;top:565.59px;">M<sub>z</sub></div>
<svg class="ic" style="left:454px;top:580px" width="16" height="18"><path d="M5 5.7 L8.8 9.4 L5 13.1" fill="none" stroke="#a4a4a4" stroke-width="1.7"/></svg>
<div class="cb" style="left:472px;top:582px"></div>
<svg class="ic" style="left:488px;top:580px" width="20" height="18" viewBox="0 0 20 18">
<path d="M3.1 8.4 L5.4 6.1 L10.2 6.1 L11.7 7.5 L8.4 9.6 Z" fill="#3ccf55" stroke="#3a5a3e" stroke-width="0.55"/>
<path d="M8.4 7.1 L8.4 9.6" stroke="#3a5a3e" stroke-width="0.5"/>
<circle cx="7.8" cy="3.8" r="1.95" fill="url(#sg)"/>
<path d="M7.45 11.2 L10.1 13.4 L8.9 13.4 L8.9 16.8 L6 16.8 L6 13.4 L4.9 13.4 Z" fill="#40f070" stroke="#4a4a4a" stroke-width="0.6"/>
<path d="M12 3.9 L14.4 1.3 L14.4 2.4 L17.9 2.4 L17.9 5.5 L14.4 5.5 L14.4 6.6 Z" fill="#40f070" stroke="#4a4a4a" stroke-width="0.6"/>
</svg>
<div class="t" style="left:511.10px;top:583.59px;">Resultant</div>
<div class="t" style="left:436.40px;top:670.59px;transform:scaleX(1.03);">Number of pictures:</div>
<div class="r" style="left:541px;top:666px;width:91px;height:20px;background:#e6e6e6;"></div>
<div class="t" style="left:544.10px;top:670.59px;transform:scaleX(0.96);">12/14</div>
</body></html>
